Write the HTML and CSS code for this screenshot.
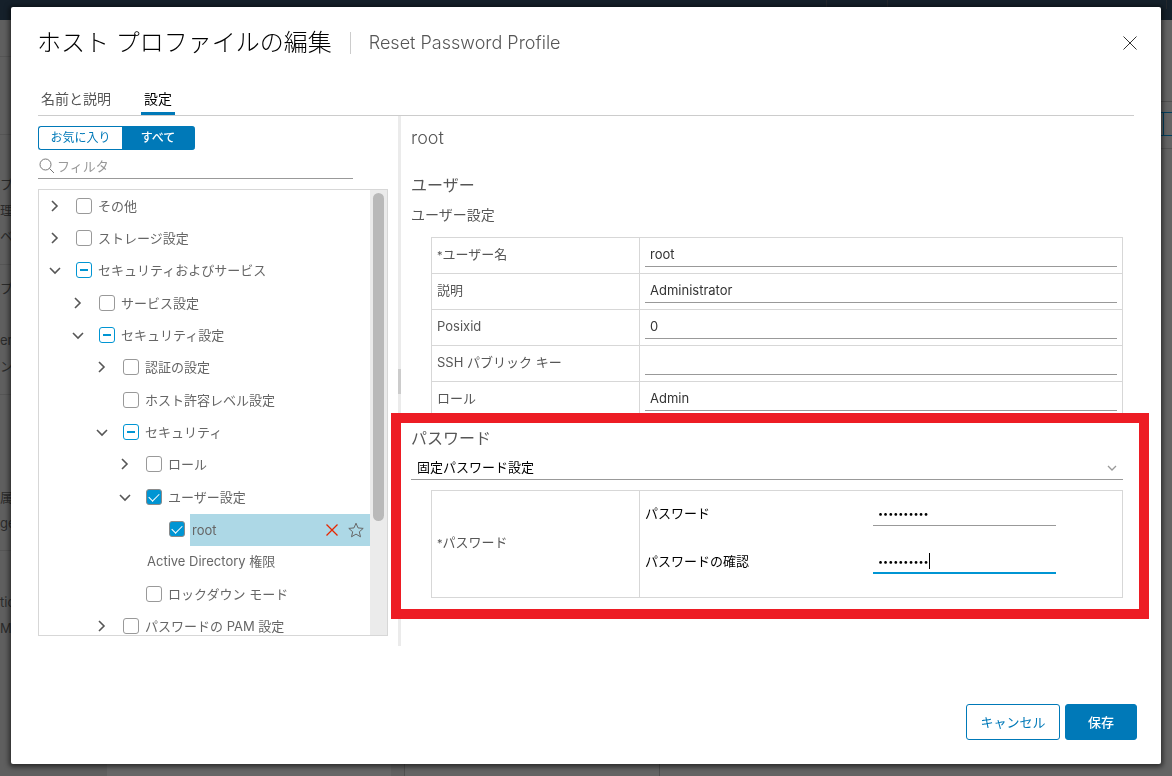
FILE: index.html
```html
<!DOCTYPE html>
<html lang="ja">
<head>
<meta charset="utf-8">
<meta name="viewport" content="width=device-width, initial-scale=1">
<title>ホスト プロファイルの編集</title>
<link rel="stylesheet" href="styles.css">
</head>
<body>
<div class="page" aria-hidden="true">
  <div class="page-top"><span></span><span></span><span></span></div>
  <div class="page-body">
    <div class="page-nav">
      <div class="page-tile"></div>
      <div class="page-tile tall"></div>
      <div class="page-group g1"><p>プ</p><p>理</p><p>ベ</p></div>
      <div class="page-group g2"><p>プロ</p><p></p><p>erv</p><p>ン</p></div>
      <div class="page-group g3"><p>属性</p><p>ge</p></div>
      <div class="page-group g4"><p>tic</p><p>M</p></div>
    </div>
    <div class="page-list"></div>
    <div class="page-gap"></div>
    <div class="page-main"><div class="page-head"></div><div class="page-bar"><div class="page-tool"></div></div><div class="page-cols"></div></div>
  </div>
</div>

<div class="overlay">
<div class="modal" role="dialog" aria-labelledby="title">
  <header class="head">
    <h1 id="title" class="title">ホスト プロファイルの編集</h1>
    <span class="subtitle">Reset Password Profile</span>
    <button class="close" type="button" aria-label="閉じる">
      <svg width="14" height="14" viewBox="0 0 14 14"><path d="M.5 .5l13 13M13.5 .5l-13 13"/></svg>
    </button>
  </header>

  <nav class="tabs" role="tablist">
    <button class="tab" type="button" role="tab">名前と説明</button>
    <button class="tab active" type="button" role="tab" aria-selected="true">設定</button>
  </nav>

  <div class="body">
    <section class="side">
      <div class="toggle">
        <button type="button">お気に入り</button>
        <button type="button" class="on">すべて</button>
      </div>
      <label class="filter">
        <svg width="16" height="16" viewBox="0 0 16 16"><circle cx="6.5" cy="6.5" r="5.5"/><path d="M10.5 10.5l4.5 4.5"/></svg>
        <input type="text" placeholder="フィルタ" aria-label="フィルタ">
      </label>
      <div class="tree">
        <ul class="nodes">
          <li class="node"><button class="chev" type="button" aria-label="展開"><svg viewBox="0 0 12 12"><path d="M3 1l5 5-5 5"/></svg></button><label><input type="checkbox">その他</label></li>
          <li class="node"><button class="chev" type="button" aria-label="展開"><svg viewBox="0 0 12 12"><path d="M3 1l5 5-5 5"/></svg></button><label><input type="checkbox">ストレージ設定</label></li>
          <li class="node"><button class="chev" type="button" aria-label="折りたたむ"><svg viewBox="0 0 12 12"><path d="M1 4l5 5 5-5"/></svg></button><label><input type="checkbox" class="mixed">セキュリティおよびサービス</label></li>
          <li class="node l1"><button class="chev" type="button" aria-label="展開"><svg viewBox="0 0 12 12"><path d="M3 1l5 5-5 5"/></svg></button><label><input type="checkbox">サービス設定</label></li>
          <li class="node l1"><button class="chev" type="button" aria-label="折りたたむ"><svg viewBox="0 0 12 12"><path d="M1 4l5 5 5-5"/></svg></button><label><input type="checkbox" class="mixed">セキュリティ設定</label></li>
          <li class="node l2"><button class="chev" type="button" aria-label="展開"><svg viewBox="0 0 12 12"><path d="M3 1l5 5-5 5"/></svg></button><label><input type="checkbox">認証の設定</label></li>
          <li class="node l2"><span class="chev"></span><label><input type="checkbox">ホスト許容レベル設定</label></li>
          <li class="node l2"><button class="chev" type="button" aria-label="折りたたむ"><svg viewBox="0 0 12 12"><path d="M1 4l5 5 5-5"/></svg></button><label><input type="checkbox" class="mixed">セキュリティ</label></li>
          <li class="node l3"><button class="chev" type="button" aria-label="展開"><svg viewBox="0 0 12 12"><path d="M3 1l5 5-5 5"/></svg></button><label><input type="checkbox">ロール</label></li>
          <li class="node l3"><button class="chev" type="button" aria-label="折りたたむ"><svg viewBox="0 0 12 12"><path d="M1 4l5 5 5-5"/></svg></button><label><input type="checkbox" checked>ユーザー設定</label></li>
          <li class="node l4"><span class="chev"></span><input type="checkbox" id="n-root" checked>
            <div class="picked"><label for="n-root">root</label>
              <button type="button" aria-label="削除"><svg class="remove" width="16" height="16" viewBox="0 0 16 16"><path d="M2.5 2.5l11 11M13.5 2.5l-11 11"/></svg></button>
              <button type="button" aria-label="お気に入りに追加"><svg class="star" width="16" height="16" viewBox="0 0 16 16"><path d="M8 1.2l2 4.7 5.2.5-3.9 3.4 1.2 5L8 12.1l-4.5 2.7 1.2-5L.8 6.4 6 5.9z"/></svg></button>
            </div>
          </li>
          <li class="node l3"><span class="bare">Active Directory 権限</span></li>
          <li class="node l3"><span class="chev"></span><label><input type="checkbox">ロックダウン モード</label></li>
          <li class="node l2"><button class="chev" type="button" aria-label="展開"><svg viewBox="0 0 12 12"><path d="M3 1l5 5-5 5"/></svg></button><label><input type="checkbox">パスワードの PAM 設定</label></li>
        </ul>
        <div class="track"><div class="thumb"></div></div>
      </div>
    </section>

    <div class="divider"><span></span></div>

    <section class="detail">
      <h2 class="name">root</h2>
      <h3 class="group">ユーザー</h3>
      <h4 class="subgroup">ユーザー設定</h4>
      <table class="props">
        <tr><th><label for="f1"><span class="star-mark">*</span>ユーザー名</label></th><td><input id="f1" type="text" value="root"></td></tr>
        <tr><th><label for="f2">説明</label></th><td><input id="f2" type="text" value="Administrator"></td></tr>
        <tr><th><label for="f3">Posixid</label></th><td><input id="f3" type="text" value="0"></td></tr>
        <tr><th><label for="f4">SSH パブリック キー</label></th><td><input id="f4" type="text"></td></tr>
        <tr><th><label for="f5">ロール</label></th><td><input id="f5" type="text" value="Admin"></td></tr>
      </table>

      <div class="password">
        <h3 class="group">パスワード</h3>
        <div class="policy">
          <select aria-label="パスワード"><option>固定パスワード設定</option></select>
          <svg width="10" height="10" viewBox="0 0 10 10"><path d="M1 3l4 4 4-4"/></svg>
        </div>
        <table class="props">
          <tr><th><span class="star-mark">*</span>パスワード</th>
            <td><div class="pair">
              <label for="p1">パスワード</label>
              <div class="secret"><input id="p1" type="password" value="0000000000"></div>
              <label for="p2">パスワードの確認</label>
              <div class="secret focus"><input id="p2" type="password" value="0000000000"><span class="caret"></span></div>
            </div></td></tr>
        </table>
      </div>
    </section>
  </div>

  <footer class="foot">
    <button type="button" class="btn">キャンセル</button>
    <button type="button" class="btn primary">保存</button>
  </footer>
</div>
</div>
</body>
</html>
```
FILE: styles.css
```css
* { box-sizing: border-box; }
body, h1, h2, h3, h4, ul, p { margin: 0; padding: 0; font-weight: 400; }
body {
  height: 100vh;
  overflow: hidden;
  font: 13px/20px Inter, "Noto Sans CJK JP", sans-serif;
  color: #565656;
  background: #5f5f5f;
}
button, input, select { font: inherit; color: inherit; margin: 0; }
button { background: none; border: 0; padding: 0; cursor: pointer; }
input, select { border: 0; border-radius: 0; outline: 0; background: none; min-width: 0; }
svg { fill: none; stroke: currentColor; display: block; }

/* dimmed page behind the dialog */
.page { height: 100vh; display: flex; flex-direction: column; color: #2b2b2b; }
.page-top { height: 20px; background: #15202a; display: flex; justify-content: flex-end; flex: none; }
.page-top span { border-left: 1px solid #24272c; height: 9px; width: 61px; }
.page-top span:nth-child(2) { width: 279px; }
.page-top span:last-child { width: 6px; }
.page-body { flex: 1; display: flex; min-height: 0; }
.page-nav { width: 107px; flex: none; overflow: hidden; white-space: nowrap; background: #5f5f5f; }
.page-tile { height: 37px; border-bottom: 1px solid #555; }
.page-tile.tall { height: 78px; }
.page-group { border-bottom: 1px solid #555; }
.page-group p { height: 26px; line-height: 26px; }
.g1 { height: 130px; padding-top: 36px; }
.g2 { height: 130px; padding-top: 10px; }
.g3 { height: 156px; padding-top: 89px; }
.g4 { border: 0; padding-top: 38px; }
.page-list { width: 284px; flex: none; background: #676767; }
.page-gap { width: 14px; flex: none; border-right: 1px solid #505050; background: #606060; }
.page-main { flex: 1; background: #646464; display: flex; flex-direction: column; }
.page-head { height: 82px; border-bottom: 1px solid #505050; }
.page-bar { padding: 10px 0 12px; border-bottom: 1px solid #555; }
.page-tool {
  height: 24px;
  border: 1px solid #00405f;
  border-right: 0;
  background: linear-gradient(to left, transparent 8px, #00405f 8px, #00405f 9px, transparent 9px);
}
.page-cols { flex: 1; width: 255px; border-right: 1px solid #505050; }

.overlay { position: fixed; inset: 0; padding: 7px 11px 12px; display: flex; }
.modal {
  flex: 1;
  min-width: 0;
  display: flex;
  flex-direction: column;
  padding: 18px 24px 24px 26px;
  background: #fff;
  border-radius: 2px;
  box-shadow: 0 1px 5px 2px rgba(0, 0, 0, .55);
}

.head { display: flex; align-items: center; height: 36px; }
.title { font-size: 24px; line-height: 36px; font-weight: 300; color: #000; }
.subtitle { margin-left: 18px; padding-left: 18px; border-left: 1px solid #ccc; font-size: 18px; line-height: 22px; font-weight: 300; }
.close { margin-left: auto; color: #333; }

.tabs { display: flex; gap: 27px; height: 30px; margin: 25px 3px 0 1px; border-bottom: 1px solid #ccc; flex: none; }
.tab { padding: 0 3px; font-size: 14px; line-height: 26px; border-bottom: 3px solid transparent; }
.tab.active { color: #000; border-color: #0079b8; }

.body { flex: 1; min-height: 0; display: flex; margin-left: 1px; }
.side { width: 350px; flex: none; display: flex; flex-direction: column; padding: 10px 0; margin-right: 10px; }
.toggle { display: flex; height: 24px; flex: none; }
.toggle button { width: 84px; font-size: 12px; line-height: 22px; color: #0079b8; border: 1px solid #0079b8; border-right: 0; border-radius: 3px 0 0 3px; }
.toggle .on { width: 73px; padding-right: 2px; background: #0079b8; color: #fff; font-weight: 500; border-radius: 0 3px 3px 0; }
.filter { display: flex; align-items: center; gap: 2px; height: 24px; margin: 5px 35px 10px 0; padding: 0 0 1px 1px; border-bottom: 1px solid #999; flex: none; color: #777; }
.filter input { flex: 1; height: 20px; padding: 0 0 1px; }
.filter input::placeholder { color: #999; opacity: 1; }

.tree { flex: 1; min-height: 0; display: flex; border: 1px solid #d7d7d7; }
.nodes { flex: 1; min-width: 0; overflow: hidden; list-style: none; color: #666; }
.node { display: flex; align-items: center; height: 32px; padding: 0 0 2px 9px; white-space: nowrap; }
.node:nth-child(3n+1) { height: 33px; }
.node.l1 { padding-left: 32px; }
.node.l2 { padding-left: 56px; }
.node.l3 { padding-left: 79px; }
.node.l4 { padding-left: 102px; }
.node label { display: flex; align-items: center; gap: 6px; }
.chev { width: 14px; height: 12px; margin-right: 14px; flex: none; color: #565656; }
.chev svg { width: 12px; height: 12px; margin-left: 1px; stroke-width: 1.6; }
.bare { padding-left: 29px; }
.node input { appearance: none; width: 16px; height: 16px; flex: none; border: 1px solid #999; border-radius: 3px; display: grid; place-items: center; }
.node .mixed { border-color: #0095d3; }
.mixed::before { content: ""; width: 8px; height: 2px; background: #0095d3; }
.node input:checked { background: #0095d3; border-color: #8a8a8a; }
.node input:checked::before { content: ""; width: 9px; height: 5px; border: solid #fff; border-width: 0 0 1px 1px; transform: translateY(-1px) rotate(-45deg); }
.picked { flex: 1; align-self: flex-start; height: 32px; display: flex; align-items: center; gap: 8px; margin-left: 5px; padding: 0 6px 1px 2px; background: #add8e6; }
.picked label { flex: 1; }
.remove { color: #e62700; stroke-width: 1.3; }
.star { color: #666; }
.track { width: 17px; flex: none; padding: 3px; background: #ebebeb; }
.thumb { height: 328px; border-radius: 6px; background: #b9b9b9; }

.divider { width: 3px; flex: none; background: #ebebeb; display: flex; align-items: center; }
.divider span { width: 3px; height: 25px; background: #ccc; }

.detail { flex: 1; min-width: 0; padding: 8px 14px 0 10px; }
.name { font-size: 18px; line-height: 28px; font-weight: 300; }
.group { font-size: 16px; line-height: 24px; margin-top: 21px; }
.subgroup { font-size: 14px; line-height: 20px; margin: 8px 0 12px; }
.props { width: calc(100% - 20px); margin-left: 20px; table-layout: fixed; border-collapse: collapse; }
.props th, .props td { border: 1px solid #d7d7d7; text-align: left; font-weight: 400; }
.props th { width: 208px; padding: 0 5px 3px; }
.props td { padding: 4px 5px 6px; }
.props td > input { display: block; width: 100%; height: 25px; padding: 0 5px 1px; border-bottom: 1px solid #999; color: #333; }
.star-mark { font-size: 11px; }

.password { position: relative; margin-top: 5px; padding: 3px 0 11px; }
.password::after { content: ""; position: absolute; inset: -10px -26px -10px -20px; border: 10px solid #ed1c24; pointer-events: none; }
.password .group { margin-top: 0; }
.policy { position: relative; margin: 5px 0 10px; }
.policy select { display: block; appearance: none; width: 100%; height: 25px; padding: 0 6px; color: #000; border-bottom: 1px solid #999; }
.policy svg { position: absolute; right: 6px; top: 8px; color: #999; stroke-width: 1.3; }
.pair { display: grid; grid-template-columns: 228px minmax(0, 183px); gap: 23px 0; align-items: center; padding: 6px 0 17px; color: #000; }
.pair label { padding-bottom: 2px; }
.secret { position: relative; height: 25px; border-bottom: 1px solid #999; }
.secret.focus { border-bottom: 2px solid #0095d3; }
.secret input { display: block; width: 100%; height: 24px; padding: 0 5px; font-size: 9px; }
.caret { position: absolute; left: 56px; top: 4px; width: 1px; height: 16px; background: #000; }

.foot { display: flex; justify-content: flex-end; gap: 5px; padding-top: 58px; flex: none; }
.btn { height: 36px; padding: 0 12px; font-size: 13px; color: #0079b8; border: 1px solid #0079b8; border-radius: 3px; min-width: 94px; }
.btn.primary { min-width: 72px; background: #0079b8; color: #fff; font-weight: 500; }
```
